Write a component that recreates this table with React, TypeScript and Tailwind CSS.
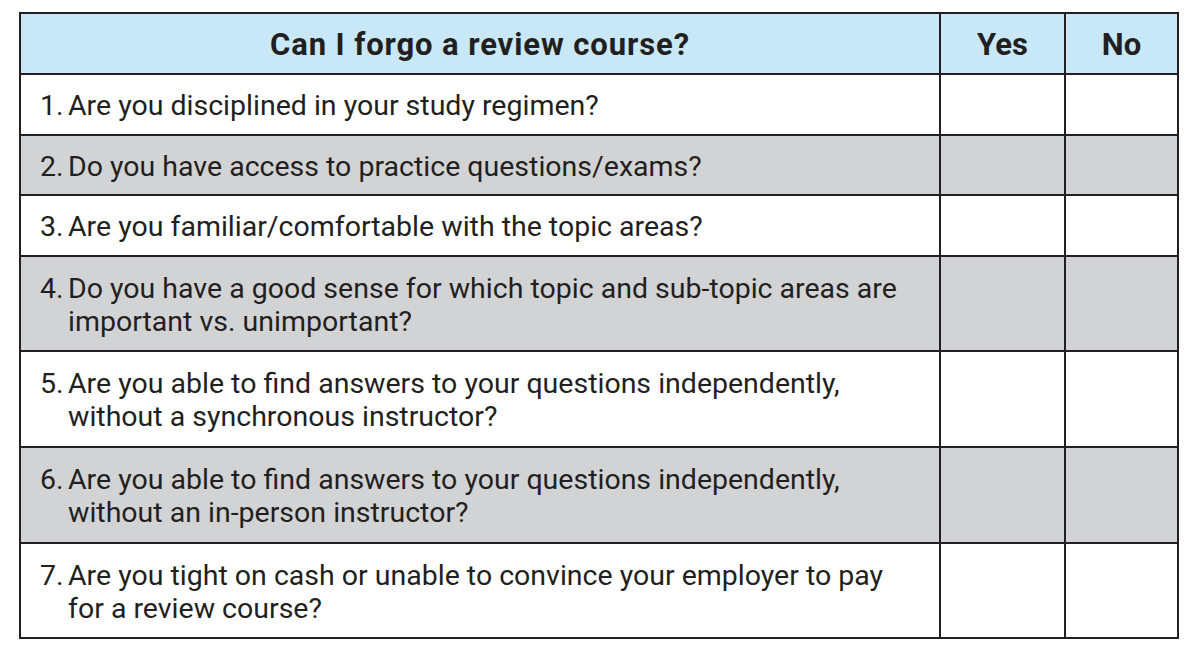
import React from "react";

const rows: { n: string; lines: string[]; gray: boolean }[] = [
  { n: "1.", lines: ["Are you disciplined in your study regimen?"], gray: false },
  { n: "2.", lines: ["Do you have access to practice questions/exams?"], gray: true },
  { n: "3.", lines: ["Are you familiar/comfortable with the topic areas?"], gray: false },
  { n: "4.", lines: ["Do you have a good sense for which topic and sub-topic areas are", "important vs. unimportant?"], gray: true },
  { n: "5.", lines: ["Are you able to find answers to your questions independently,", "without a synchronous instructor?"], gray: false },
  { n: "6.", lines: ["Are you able to find answers to your questions independently,", "without an in-person instructor?"], gray: true },
  { n: "7.", lines: ["Are you tight on cash or unable to convince your employer to pay", "for a review course?"], gray: false },
];

const heights = ["h-[61px]", "h-[60px]", "h-[61px]", "h-[95px]", "h-[96px]", "h-[96px]", "h-[93px]"];

export default function App() {
  return (
    <div className="w-[1200px] h-[665px] bg-white pt-[12px] pl-[19px]" style={{ fontFamily: "Roboto, 'Liberation Sans', sans-serif" }}>
      <div className="w-[1160px] border-2 border-[#231f20]">
        <div className="flex h-[61px] bg-[#c8e8f8] border-b-2 border-[#231f20]">
          <div className="w-[918px] flex items-center justify-center pt-[3px] text-[31px] tracking-[0.9px] font-bold text-[#231f20]">Can I forgo a review course?</div>
          <div className="w-[125px] border-l-2 border-[#231f20] flex items-center justify-center pt-[3px] text-[31px] font-bold text-[#231f20]">Yes</div>
          <div className="flex-1 border-l-2 border-[#231f20] flex items-center justify-center pt-[3px] text-[31px] font-bold text-[#231f20]">No</div>
        </div>
        {rows.map((r, i) => (
          <div key={i} className={`flex ${heights[i]} ${r.gray ? "bg-[#d1d3d4]" : "bg-white"} ${i < rows.length - 1 ? "border-b-2 border-[#231f20]" : ""}`}>
            <div className="w-[918px] flex items-center pl-[19px] pt-[2px] text-[28.5px] leading-[33px] text-[#231f20]">
              <div className="flex">
                <span className="w-[28px] shrink-0">{r.n}</span>
                <div className="flex flex-col">
                  {r.lines.map((l, j) => (
                    <span key={j}>{l}</span>
                  ))}
                </div>
              </div>
            </div>
            <div className="w-[125px] border-l-2 border-[#231f20]" />
            <div className="flex-1 border-l-2 border-[#231f20]" />
          </div>
        ))}
      </div>
    </div>
  );
}
